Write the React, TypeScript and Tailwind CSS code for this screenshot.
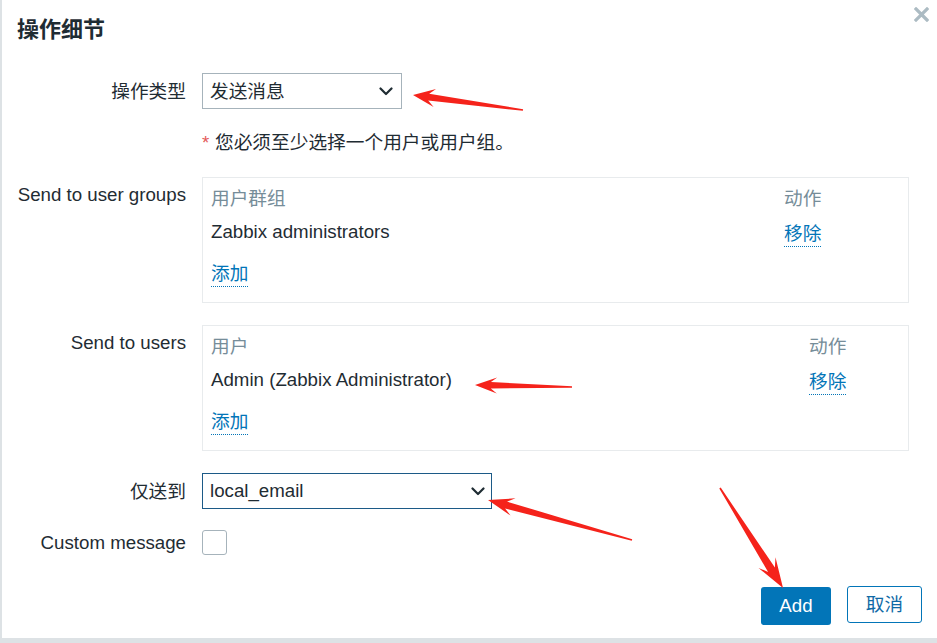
import React from "react";

type P = [number, number];

function arrowPoints(tail: P, tip: P, headLen: number, headHalf: number, neckHalf: number, tailHalf: number): string {
  const dx = tip[0] - tail[0];
  const dy = tip[1] - tail[1];
  const len = Math.hypot(dx, dy);
  const ux = dx / len;
  const uy = dy / len;
  const nx = -uy;
  const ny = ux;
  const at = (d: number, w: number): P => [tip[0] - ux * d + nx * w, tip[1] - uy * d + ny * w];
  const pts: P[] = [
    at(len, tailHalf),
    at(headLen * 0.72, neckHalf),
    at(headLen, headHalf),
    tip,
    at(headLen, -headHalf),
    at(headLen * 0.72, -neckHalf),
    at(len, -tailHalf),
  ];
  return pts.map((p) => `${p[0].toFixed(1)},${p[1].toFixed(1)}`).join(" ");
}

function Chevron() {
  return (
    <svg width="14" height="9" viewBox="0 0 14 9" className="shrink-0">
      <polyline points="1.5,1.5 7,7 12.5,1.5" fill="none" stroke="#1f2c33" strokeWidth="2.2" strokeLinecap="round" strokeLinejoin="round" />
    </svg>
  );
}

function Link({ children }: { children: React.ReactNode }) {
  return (
    <span className="inline-block leading-[24px] h-[25px] text-[#0275b8] border-b border-dotted border-[#0275b8]">{children}</span>
  );
}

function ListBox({ header, item, colW }: { header: string; item: string; colW: string }) {
  return (
    <div className="w-[707px] h-[126px] border border-[#e8ebed] pl-[8px] pt-[9px]">
      <div className="flex leading-[24px] h-[33px] text-[#768d99]">
        <div className={colW}>{header}</div>
        <div>动作</div>
      </div>
      <div className="flex leading-[24px] h-[40px]">
        <div className={colW}>{item}</div>
        <div className="pt-[2px]">
          <Link>移除</Link>
        </div>
      </div>
      <div>
        <Link>添加</Link>
      </div>
    </div>
  );
}

export default function App() {
  const arrows = [
    arrowPoints([523, 110], [413, 95], 22, 9, 3.5, 0.8),
    arrowPoints([572, 387], [475, 385], 22, 8, 3.2, 0.8),
    arrowPoints([632, 540], [488, 500], 26, 9, 3.5, 0.8),
    arrowPoints([720, 488], [783, 588], 30, 10, 4, 0.8),
  ];
  return (
    <div
      className="relative w-[937px] h-[643px] overflow-hidden bg-[#dde2e5] text-[#1f2c33] text-[18.7px]"
      style={{ fontFamily: '"Liberation Sans", Arial, "Noto Sans CJK SC", sans-serif' }}
    >
      <div className="relative ml-[2px] h-[638px] bg-white">
        <svg className="absolute right-[8px] top-[7px]" width="15" height="15" viewBox="0 0 15 15">
          <path d="M2 2 L13 13 M13 2 L2 13" stroke="#acbbc3" strokeWidth="3.2" strokeLinecap="square" />
        </svg>
        <div className="pt-[17px] pl-[15px] text-[22px] font-bold leading-[26px] text-[#1f2c33]">操作细节</div>

        <div className="mt-[30px] flex">
          <div className="w-[184px] h-[36px] text-right leading-[37px]">操作类型</div>
          <div className="ml-[16px] w-[200px] h-[36px] border border-[#a6b3bb] flex items-center justify-between pl-[7px] pr-[8px]">
            <span className="pt-[2px]">发送消息</span>
            <Chevron />
          </div>
        </div>

        <div className="mt-[22px] pl-[200px] leading-[24px] flex">
          <span className="text-[#e45959] w-[13px]">*</span>
          <span>您必须至少选择一个用户或用户组。</span>
        </div>

        <div className="mt-[22px] flex">
          <div className="w-[184px] text-right leading-[24px] pt-[6px]">Send to user groups</div>
          <div className="ml-[16px]">
            <ListBox header="用户群组" item="Zabbix administrators" colW="w-[573px]" />
          </div>
        </div>

        <div className="mt-[22px] flex">
          <div className="w-[184px] text-right leading-[24px] pt-[6px]">Send to users</div>
          <div className="ml-[16px]">
            <ListBox header="用户" item="Admin (Zabbix Administrator)" colW="w-[598px]" />
          </div>
        </div>

        <div className="mt-[22px] flex">
          <div className="w-[184px] h-[36px] text-right leading-[37px]">仅送到</div>
          <div className="ml-[16px] w-[290px] h-[36px] border border-[#1c5a87] flex items-center justify-between pl-[7px] pr-[6px]">
            <span className="pt-[1px]">local_email</span>
            <Chevron />
          </div>
        </div>

        <div className="mt-[21px] flex items-center">
          <div className="w-[184px] text-right leading-[25px]">Custom message</div>
          <div className="ml-[16px] w-[25px] h-[25px] rounded-[3px] border border-[#a6b3bb] bg-white" />
        </div>

        <div className="mt-[32px] flex justify-end gap-[16px] pr-[15px]">
          <button className="w-[70px] h-[38px] rounded-[3px] bg-[#0275b8] text-white text-[18.7px] leading-[38px]">Add</button>
          <button className="w-[75px] h-[37px] -mt-[1px] rounded-[3px] border border-[#0275b8] bg-white text-[#0f6aa6] text-[18.7px] leading-[35px]">取消</button>
        </div>
      </div>

      <svg className="absolute left-0 top-0 pointer-events-none" width="937" height="643">
        {arrows.map((p, i) => (
          <polygon key={i} points={p} fill="#f5231b" />
        ))}
      </svg>
    </div>
  );
}
